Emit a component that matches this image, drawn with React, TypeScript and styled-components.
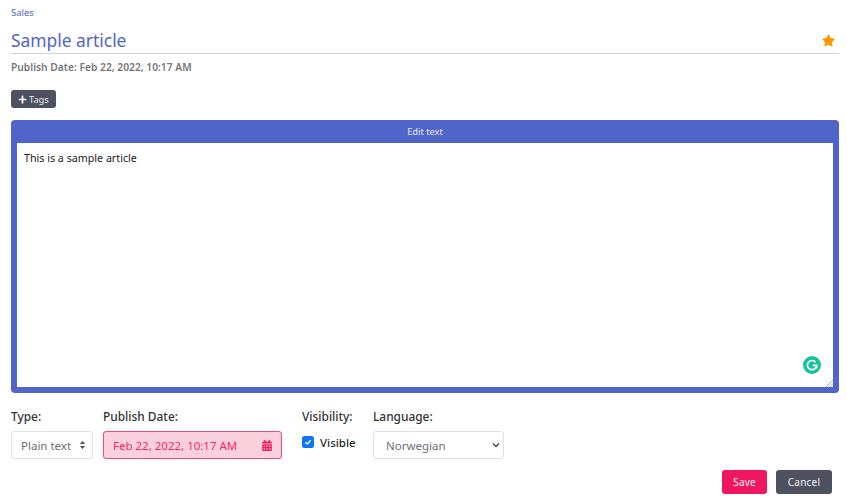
import styled, { createGlobalStyle } from "styled-components";
import { FaCalendarAlt, FaPlus, FaStar } from "react-icons/fa";

const GlobalStyle = createGlobalStyle`
  html, body {
    margin: 0;
    padding: 0;
    background: #fff;
    font-family: "Noto Sans", "Open Sans", sans-serif;
  }
`;

const Page = styled.div`
  width: 847px;
  height: 500px;
  box-sizing: border-box;
  padding: 6px 8px 0 11px;
  overflow: hidden;
`;

const Breadcrumb = styled.div`
  font-size: 9.5px;
  line-height: 13px;
  color: #4f65c9;
`;

const TitleRow = styled.div`
  display: flex;
  justify-content: space-between;
  align-items: center;
  box-sizing: border-box;
  height: 35px;
  padding: 8px 4px 0 0;
  border-bottom: 1px solid #d2d2d2;
  color: #4f65c9;
`;

const Title = styled.h1`
  margin: 0;
  font-size: 17.4px;
  line-height: 26px;
  font-weight: 400;
`;

const StarIcon = styled(FaStar)`
  width: 13px;
  height: 13px;
  color: #ff9800;
`;

const Published = styled.div`
  margin-top: 6px;
  font-size: 10.25px;
  line-height: 15px;
  font-weight: 600;
  color: #777;
`;

const TagsButton = styled.button`
  display: flex;
  align-items: center;
  gap: 2px;
  height: 18px;
  width: 45px;
  margin-top: 15px;
  padding: 0 0 0 7px;
  border: none;
  border-radius: 3px;
  background: #4d5160;
  color: #e8e8ec;
  font-family: inherit;
  font-size: 9.25px;
  svg {
    width: 9px;
    height: 9px;
    color: #fff;
  }
`;

const EditorPanel = styled.section`
  display: flex;
  flex-direction: column;
  height: 273px;
  box-sizing: border-box;
  margin-top: 12px;
  padding: 0 6px 6px;
  border-radius: 4px;
  background: #4f65c9;
`;

const PanelHeader = styled.div`
  height: 23px;
  flex: none;
  font-size: 9.25px;
  line-height: 23px;
  text-align: center;
  color: #e6e9f8;
`;

const EditorBody = styled.div`
  position: relative;
  flex: 1;
  background: #fff;
`;

const EditorText = styled.div`
  padding: 8px 7px;
  font-size: 10.7px;
  line-height: 15px;
  color: #222;
`;

const GrammarBadge = styled.svg`
  position: absolute;
  right: 12px;
  bottom: 13px;
  width: 18px;
  height: 18px;
`;

const ResizeGrip = styled.svg`
  position: absolute;
  right: 0;
  bottom: 0;
  width: 8px;
  height: 8px;
`;

const FieldRow = styled.div`
  display: flex;
  margin-top: 15px;
`;

const Field = styled.div<{ $width: number }>`
  display: flex;
  flex-direction: column;
  width: ${p => p.$width}px;
  flex: none;
`;

const FieldLabel = styled.label`
  font-size: 11.9px;
  line-height: 16px;
  font-weight: 500;
  color: #333;
  margin-bottom: 7px;
`;

const Control = styled.div<{ $width: number }>`
  display: flex;
  align-items: center;
  justify-content: space-between;
  box-sizing: border-box;
  width: ${p => p.$width}px;
  height: 28px;
  padding: 0 6px 0 9px;
  border: 1px solid #dfe2e8;
  border-radius: 3px;
  background: #fff;
  font-size: 11.5px;
  color: #6b6f76;
`;

const LanguageControl = styled(Control)`
  padding: 0 3px 0 12px;
`;

const DateControl = styled(Control)`
  padding: 0 9px 0 9px;
  border-color: #f0487f;
  background: #fbd0dd;
  color: #f0296f;
  svg {
    width: 10px;
    height: 11px;
    color: #ec1a63;
  }
`;

const CheckRow = styled.div`
  display: flex;
  align-items: center;
  gap: 6px;
  height: 24px;
  margin-top: -1px;
  font-size: 11.5px;
  font-weight: 500;
  color: #2b2b2b;
`;

const CheckBox = styled.span`
  display: flex;
  align-items: center;
  justify-content: center;
  width: 12px;
  height: 12px;
  border-radius: 2.5px;
  background: #0d76f2;
  svg {
    width: 8px;
    height: 8px;
  }
`;

const Actions = styled.div`
  display: flex;
  justify-content: flex-end;
  gap: 9px;
  margin-top: 11px;
  padding-right: 7px;
`;

const ActionButton = styled.button<{ $primary?: boolean }>`
  height: 24px;
  width: ${p => (p.$primary ? 45 : 56)}px;
  padding: 0;
  border: none;
  border-radius: 3px;
  background: ${p => (p.$primary ? "#f0165f" : "#4d5160")};
  color: #f3f3f5;
  font-family: inherit;
  font-size: 10px;
  letter-spacing: 0.2px;
`;

const App = () => {
  return (
    <Page>
      <GlobalStyle />
      <Breadcrumb>Sales</Breadcrumb>
      <TitleRow>
        <Title>Sample article</Title>
        <StarIcon />
      </TitleRow>
      <Published>Publish Date: Feb 22, 2022, 10:17 AM</Published>
      <TagsButton>
        <FaPlus />
        Tags
      </TagsButton>
      <EditorPanel>
        <PanelHeader>Edit text</PanelHeader>
        <EditorBody>
          <EditorText>This is a sample article</EditorText>
          <GrammarBadge viewBox="0 0 18 18">
            <circle cx="9" cy="9" r="9" fill="#15c39a" />
            <path
              d="M12.6 6.2A4.6 4.6 0 1 0 13.6 9.4H9.8M13.6 9.4v3.2"
              fill="none"
              stroke="#fff"
              strokeWidth="1.7"
            />
          </GrammarBadge>
          <ResizeGrip viewBox="0 0 8 8">
            <path d="M1 8 8 1M4.5 8 8 4.5" stroke="#999" strokeWidth="0.8" />
          </ResizeGrip>
        </EditorBody>
      </EditorPanel>
      <FieldRow>
        <Field $width={92}>
          <FieldLabel>Type:</FieldLabel>
          <Control $width={82}>
            Plain text
            <svg width="7" height="10" viewBox="0 0 7 10">
              <path d="M3.5 1 6.2 4H.8zM3.5 9 .8 6h5.4z" fill="#555" />
            </svg>
          </Control>
        </Field>
        <Field $width={199}>
          <FieldLabel>Publish Date:</FieldLabel>
          <DateControl $width={179}>
            Feb 22, 2022, 10:17 AM
            <FaCalendarAlt />
          </DateControl>
        </Field>
        <Field $width={71}>
          <FieldLabel>Visibility:</FieldLabel>
          <CheckRow>
            <CheckBox>
              <svg viewBox="0 0 8 8">
                <path d="M1.3 4.2 3.2 6 6.7 2.2" fill="none" stroke="#fff" strokeWidth="1.4" />
              </svg>
            </CheckBox>
            Visible
          </CheckRow>
        </Field>
        <Field $width={131}>
          <FieldLabel>Language:</FieldLabel>
          <LanguageControl $width={131}>
            Norwegian
            <svg width="8" height="6" viewBox="0 0 8 6">
              <path d="M1 1.5 4 4.5 7 1.5" fill="none" stroke="#444" strokeWidth="1.4" />
            </svg>
          </LanguageControl>
        </Field>
      </FieldRow>
      <Actions>
        <ActionButton $primary>Save</ActionButton>
        <ActionButton>Cancel</ActionButton>
      </Actions>
    </Page>
  );
};

export default App;
